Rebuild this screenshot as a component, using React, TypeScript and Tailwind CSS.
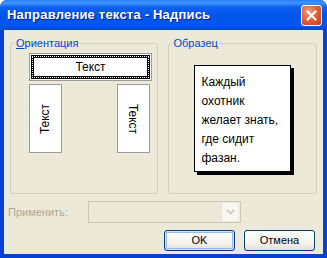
import React from 'react';

const font = "font-['Tahoma','Liberation_Sans',Arial,sans-serif]";

// XP style group box with label sitting on the frame
const GroupBox: React.FC<{ label: React.ReactNode; className?: string; children?: React.ReactNode }> = ({
  label,
  className = '',
  children,
}) => (
  <div className={`relative border border-[#d0d0bf] rounded-[3px] ${className}`}>
    <span className="absolute -top-[8px] left-[4px] bg-[#ece9d8] px-[1px] text-[11px] leading-[14px] text-[#0046d5]">
      {label}
    </span>
    {children}
  </div>
);

const XpButton: React.FC<{ label: string; isDefault?: boolean }> = ({ label, isDefault }) => (
  <button
    className={`w-[71px] h-[21px] rounded-[3px] border border-[#003c74] bg-[linear-gradient(180deg,#ffffff_0%,#f6f5f0_60%,#e3e0d2_100%)] text-[11px] text-black ${
      isDefault ? 'shadow-[inset_0_0_0_1px_#cee7ff,inset_0_0_0_2px_#98b8ea]' : ''
    }`}
  >
    {label}
  </button>
);

export default function App() {
  return (
    <div className={`w-[327px] h-[258px] bg-white ${font}`}>
      <div className="w-full h-full flex flex-col rounded-t-[7px] bg-[#0842d4] overflow-hidden">
        {/* Title bar */}
        <div className="h-[30px] flex items-center justify-between pl-[7px] pr-[5px] bg-[linear-gradient(180deg,#2b7bf5_0%,#3f94ff_10%,#0a5ff0_25%,#0055e8_60%,#0058ee_85%,#0046d0_100%)]">
          <span className="text-white font-bold text-[13px] tracking-[0.2px] [text-shadow:1px_1px_0_#0a1e78]">
            Направление текста - Надпись
          </span>
          <div className="w-[21px] h-[21px] rounded-[3px] border border-white bg-[radial-gradient(circle_at_35%_30%,#f0a188_0%,#e2613a_45%,#c1401c_100%)] flex items-center justify-center">
            <svg width="11" height="11" viewBox="0 0 11 11">
              <path d="M1.5 1.5 L9.5 9.5 M9.5 1.5 L1.5 9.5" stroke="white" strokeWidth="2" strokeLinecap="square" />
            </svg>
          </div>
        </div>

        {/* Client area */}
        <div className="flex-1 mx-[4px] mb-[4px] bg-[#ece9d8] flex flex-col px-[6px] pt-[13px]">
          <div className="flex gap-[10px]">
            <GroupBox
              className="w-[148px] h-[151px]"
              label={
                <>
                  <span className="underline">О</span>риентация
                </>
              }
            >
              <div className="flex flex-col pl-[18px] pt-[9px] gap-[3px]">
                <div className="w-[123px] h-[28px] border border-[#9c9c9c] bg-white p-[1px]">
                  <div className="w-full h-full border-[3px] border-black outline outline-1 outline-dotted outline-white outline-offset-[-2px] flex items-center justify-center text-[12px] text-black">
                    Текст
                  </div>
                </div>
                <div className="flex justify-between w-[121px]">
                  <div className="w-[33px] h-[69px] border border-[#9c9c9c] bg-white flex items-center justify-center">
                    <span className="-rotate-90 text-[12px] whitespace-nowrap">Текст</span>
                  </div>
                  <div className="w-[33px] h-[69px] border border-[#9c9c9c] bg-white flex items-center justify-center">
                    <span className="rotate-90 text-[12px] whitespace-nowrap">Текст</span>
                  </div>
                </div>
              </div>
            </GroupBox>

            <GroupBox className="w-[150px] h-[151px]" label="Образец">
              <div className="pl-[25px] pt-[21px]">
                <div className="w-[97px] h-[107px] border border-black bg-white shadow-[3px_3px_0_#000] pl-[7px] pt-[7px] text-[12px] leading-[19px] text-black">
                  <div>Каждый</div>
                  <div>охотник</div>
                  <div>желает знать,</div>
                  <div>где сидит</div>
                  <div>фазан.</div>
                </div>
              </div>
            </GroupBox>
          </div>

          {/* Apply row */}
          <div className="flex items-center mt-[7px] h-[22px]">
            <span className="w-[80px] -ml-[2px] text-[11px] text-[#aca899]">Применить:</span>
            <div className="w-[153px] h-[22px] border border-[#c9c7ba] bg-[#ece9d8] flex justify-end p-[1px]">
              <div className="w-[17px] h-full bg-[#f7f6f1] rounded-[2px] flex items-center justify-center">
                <svg width="9" height="6" viewBox="0 0 9 6">
                  <path d="M1 1 L4.5 4.5 L8 1" stroke="#c9c7ba" strokeWidth="1.6" fill="none" />
                </svg>
              </div>
            </div>
          </div>

          {/* Buttons */}
          <div className="flex justify-end gap-[9px] mt-[7px] pr-[2px]">
            <XpButton label="OK" isDefault />
            <XpButton label="Отмена" />
          </div>
        </div>
      </div>
    </div>
  );
}
